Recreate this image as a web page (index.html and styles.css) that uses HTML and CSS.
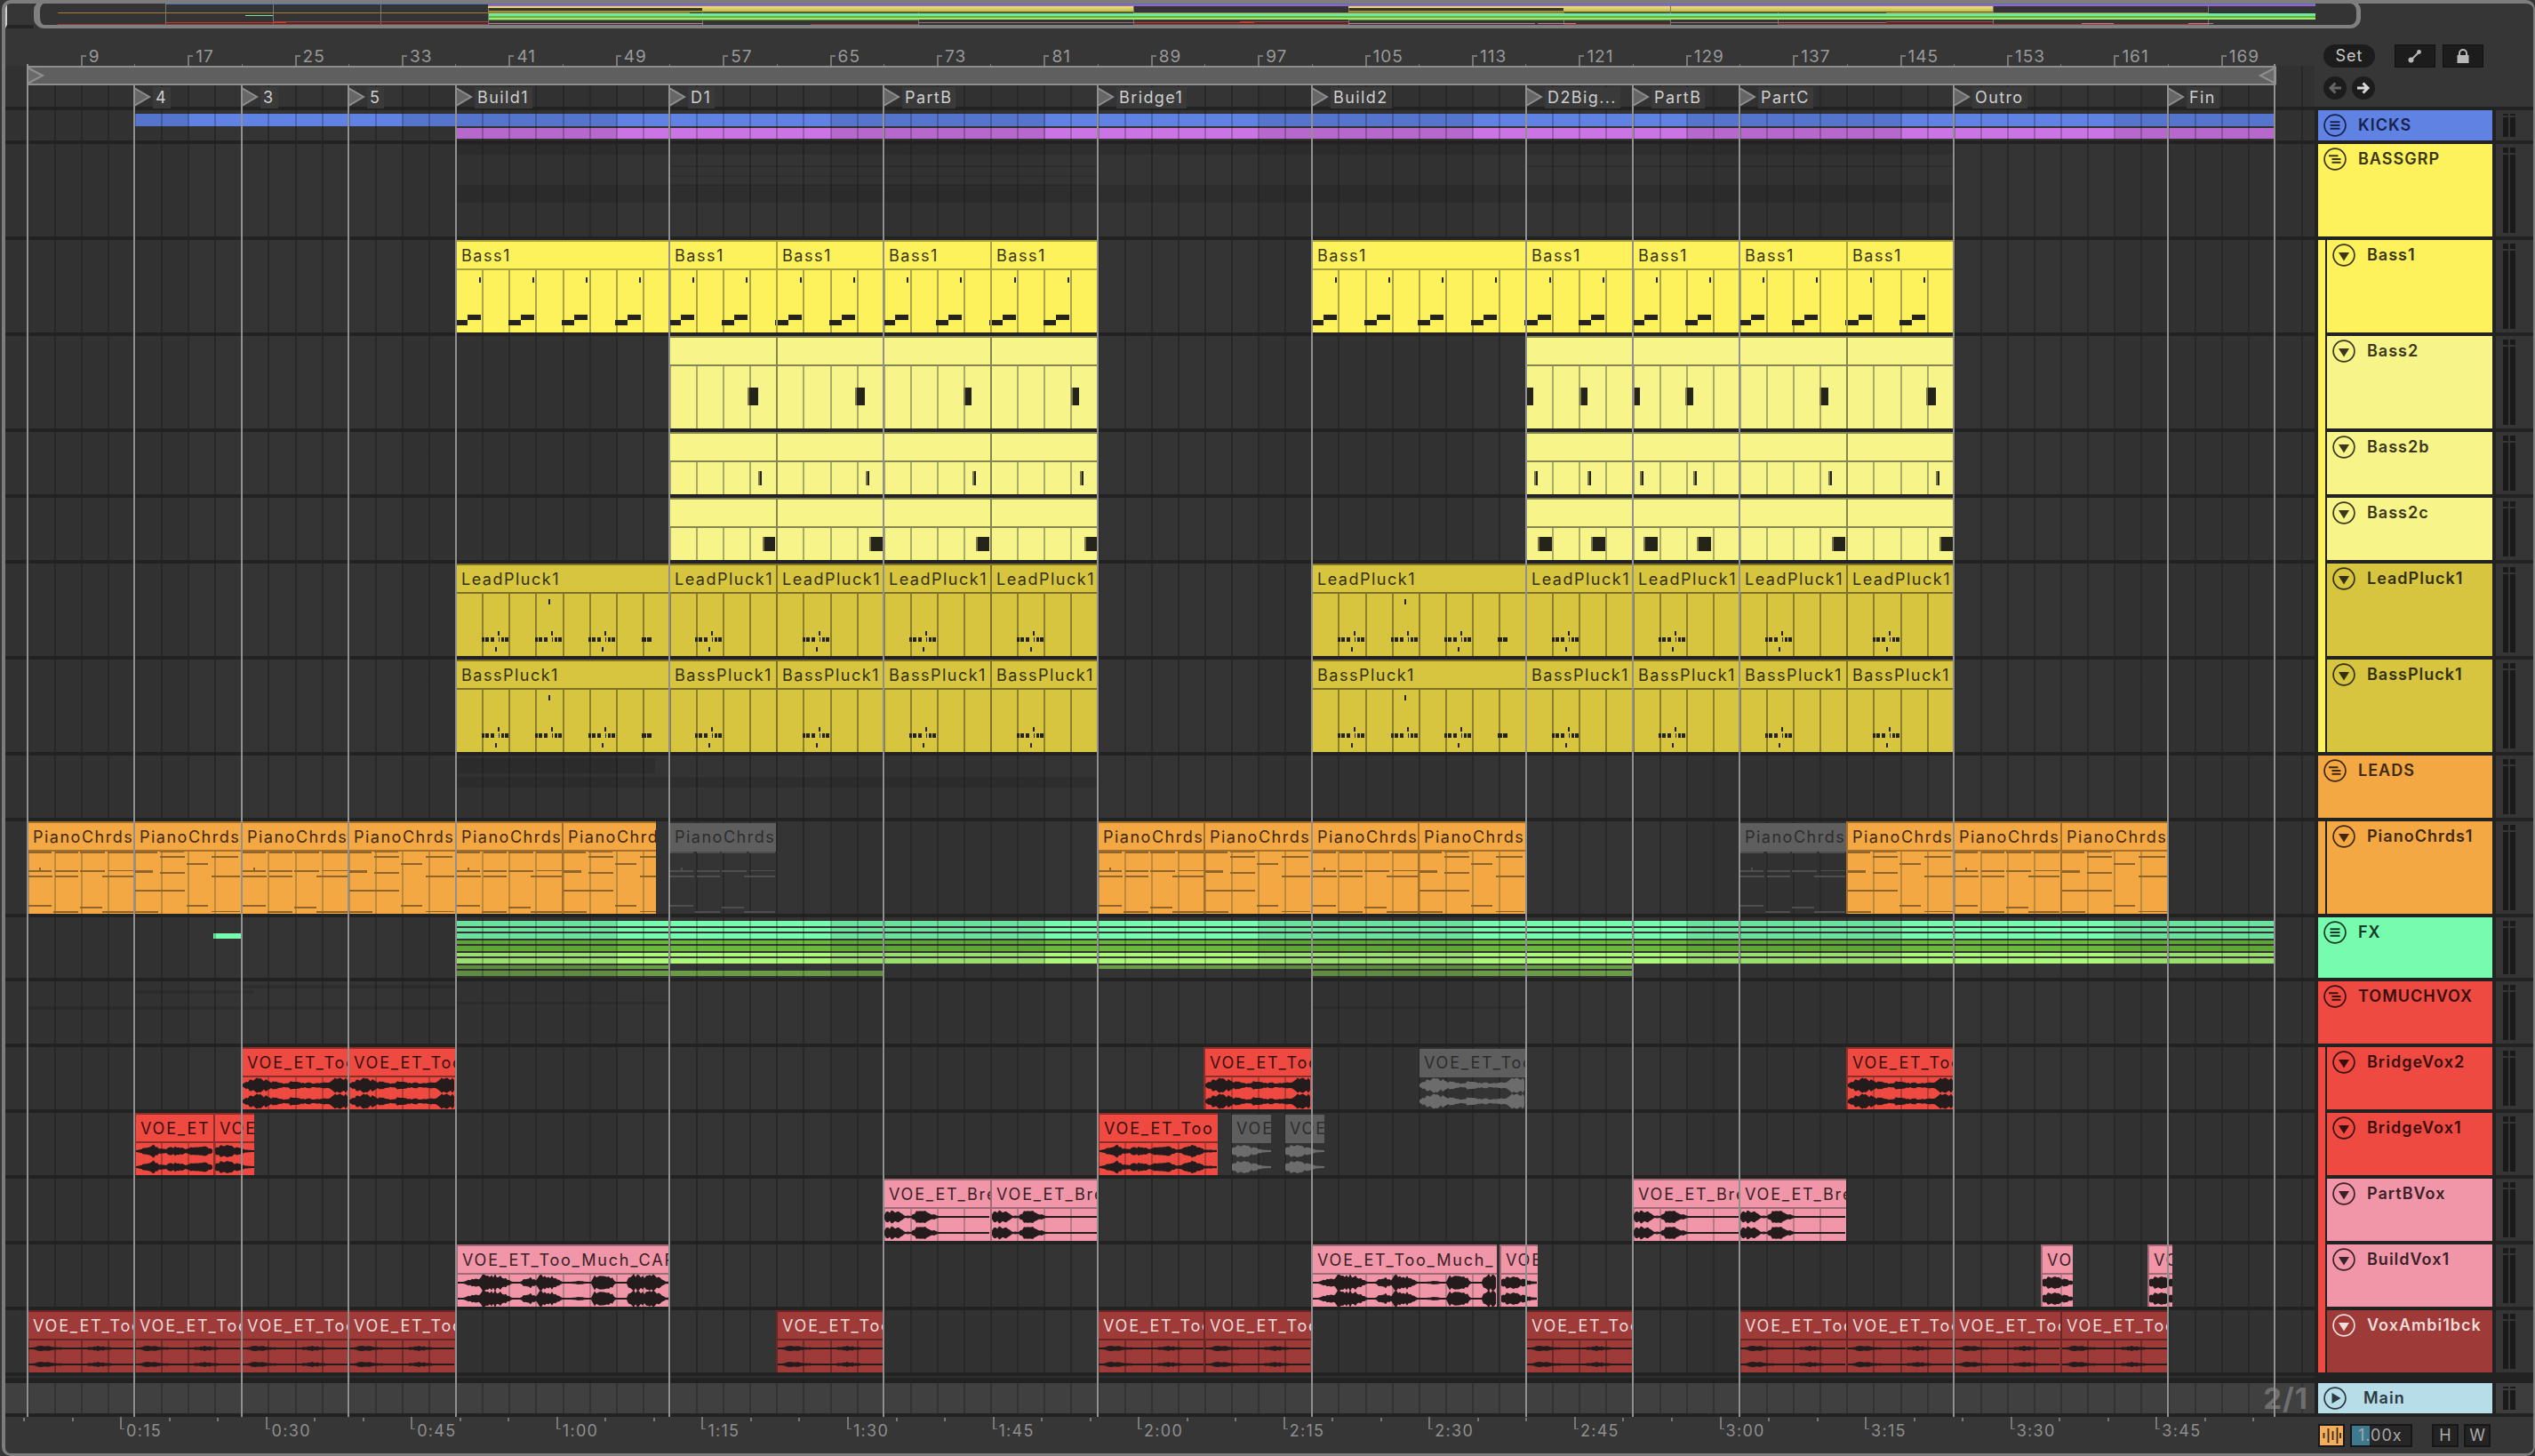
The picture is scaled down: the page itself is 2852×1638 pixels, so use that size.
FILE: index.html
```html
<!DOCTYPE html>
<html lang="en">
<head>
<meta charset="utf-8">
<title>Arrangement View</title>
<link rel="stylesheet" href="styles.css">
</head>
<body>
<svg class="defs" width="0" height="0" aria-hidden="true">
  <symbol id="i-lines" viewBox="0 0 26 26"><circle cx="13" cy="13" r="11.9" class="ring"/><path d="M7.5 9.3h11M7.5 13h11M7.5 16.7h11" class="bar"/></symbol>
  <symbol id="i-stag" viewBox="0 0 26 26"><circle cx="13" cy="13" r="11.9" class="ring"/><path d="M6 9.3h10.5M9.5 13h10M9.5 16.7h10" class="bar"/></symbol>
  <symbol id="i-down" viewBox="0 0 26 26"><circle cx="13" cy="13" r="11.9" class="ring"/><path d="M7 10h12l-6 9.5z" class="fill"/></symbol>
  <symbol id="i-play" viewBox="0 0 26 26"><circle cx="13" cy="13" r="11.9" class="ring"/><path d="M9.5 7l10 6-10 6z" class="fill"/></symbol>
</svg>
<div class="frame">
  <div class="over-row">
    <div class="over-left"></div>
    <div class="overview" id="overview"></div>
  </div>
  <div class="header">
    <div class="header-main">
      <div class="ruler" id="ruler"></div>
      <div class="toprow lane" id="toprow"></div>
    </div>
    <div class="panel">
      <div class="panel-row">
        <div class="set">Set</div>
        <div class="tool tool-a"><svg width="18" height="18" viewBox="0 0 18 18"><path d="M4 14L14 4" stroke="#b9b9b9" stroke-width="2"/><circle cx="4.5" cy="13.5" r="3" fill="#b9b9b9"/><circle cx="13.5" cy="4.5" r="2.4" fill="#b9b9b9"/></svg></div>
        <div class="tool"><svg width="18" height="18" viewBox="0 0 18 18"><path d="M5 8V6a4 4 0 018 0v2" fill="none" stroke="#b9b9b9" stroke-width="2"/><rect x="2.500" y="8" width="13" height="9" fill="#b9b9b9"/></svg></div>
      </div>
      <div class="panel-row arrows">
        <div class="arrow"><svg width="18" height="18" viewBox="0 0 18 18"><path d="M16 9H6M9.500 3.500L4 9l5.500 5.500" fill="none" stroke="#666" stroke-width="3"/></svg></div>
        <div class="arrow"><svg width="18" height="18" viewBox="0 0 18 18"><path d="M2 9h10M8.500 3.500L14 9l-5.500 5.500" fill="none" stroke="#d8d8d8" stroke-width="3"/></svg></div>
      </div>
    </div>
  </div>
  <div class="tracks" id="tracks"></div>
  <div class="stub"><div class="stub-line"></div></div>
  <div class="row h34">
    <div class="lane lane-main"><span class="sig">2/1</span></div>
    <div class="hd"><div class="head t-main head-main"><svg class="ic"><use href="#i-play"/></svg><span>Main</span></div></div>
    <div class="meter meter-main"><div class="mc"><div class="seg"></div><div class="rest"></div></div><div class="mc"><div class="seg"></div><div class="rest"></div></div></div>
  </div>
  <div class="footer">
    <div class="timeline" id="timeline"></div>
    <div class="ctrls">
      <div class="wavebtn"><svg width="26" height="22" viewBox="0 0 26 22"><path d="M4.500 8v6M9.500 3v16M14.500 6v10M19.500 2v18M23 8v6" stroke="#3a2a10" stroke-width="1.800"/></svg></div>
      <div class="zoomval"><div class="zoomfill"></div><span>1.00x</span></div>
      <div class="hw hw-h">H</div>
      <div class="hw">W</div>
    </div>
  </div>
  <div class="markers" id="markers"></div>
</div>
<script src="app.js"></script>
</body>
</html>
```

FILE: styles.css
```css
:root{
  --bands:repeating-linear-gradient(90deg,rgba(0,0,0,.1) 0 212.4px,transparent 212.4px 453.4px,rgba(0,0,0,.1) 453.4px 481.6px);
  --grid:repeating-linear-gradient(90deg,transparent 0 .4px,rgba(0,0,0,.22) .4px 2.4px,transparent 2.4px 30.1px);
}
*{box-sizing:border-box}
html,body{margin:0;height:100%;background:#363636;overflow:hidden}
body{font:18px/1 Inter,"Liberation Sans",sans-serif;letter-spacing:1px;color:#ccc}
.defs{position:absolute}
.ring{fill:none;stroke:currentColor;stroke-width:1.7}
.bar{fill:none;stroke:currentColor;stroke-width:2}
.fill{fill:currentColor}

.frame{position:relative;margin-left:2px;width:2850px;height:1638px;border:solid #7d7d7d;border-width:4px 2px 3px 4px;border-radius:10px;background:#363636;overflow:hidden}

/* overview */
.over-row{display:flex;height:28px}
.over-left{width:32px;height:28px;border-left:2px solid #cfcfcf;border-bottom:4px solid #242424}
.overview{position:relative;width:2618px;height:32px;margin-top:-4px;border:solid #808080;border-width:4px 5px 4px 7px;border-radius:12px;background:#343434;overflow:hidden}
.over-row::after{content:"";flex:1;height:28px;border-bottom:4px solid #242424}
.mini{position:absolute;height:1px}
.miniline{position:absolute;top:0;bottom:0;width:1px;background:#787878}

/* header */
.header{display:flex;height:88px}
.header-main{width:2598px;display:flex;flex-direction:column}
.ruler{position:relative;height:42px;background:#363636}
.tick{position:absolute;top:30px;height:12px;width:6px;border-left:2px solid #777;border-top:2px solid #777}
.tick-s{position:absolute;top:40px;height:2px;width:1px;background:#777}
.rlabel{position:absolute;top:21px;line-height:22px;color:#999;font-size:19px}
.toprow{position:relative;height:46px;flex:none}
.loop{position:absolute;left:25px;top:0;width:2529px;height:22px;background:#5f5f5f;border:solid #8e8e8e;border-width:2px 0}
.tri{position:absolute;display:block}
.tri-l{left:24px;top:0}
.tri-r{left:2534px;top:0}
.loc-tri{position:absolute;top:24px}
.loc-label{position:absolute;top:24px;height:24px;padding:0 4px 0 3px;line-height:24px;letter-spacing:1.4px;background:#3a3a3a;color:#cfcfcf;white-space:nowrap}

.panel{flex:1;background:#363636;padding:18px 0 0 10px}
.panel-row{display:flex;align-items:center;height:26px}
.arrows{margin-top:10px;gap:6px}
.set{width:58px;height:26px;border-radius:13px;background:#1c1c1c;color:#c9c9c9;text-align:center;line-height:26px;font-size:18px}
.tool{width:46px;height:26px;margin-left:8px;background:#1c1c1c;display:flex;align-items:center;justify-content:center;border:1px solid #111}
.tool-a{margin-left:22px}
.arrow{width:26px;height:26px;border-radius:50%;background:#1c1c1c;display:flex;align-items:center;justify-content:center}

/* rows */
.tracks{padding-top:4px;background:#222}
.row{display:flex;background:#222}
.h34{height:38px}.h68{height:72px}.h70{height:74px}.h104{height:108px}
.lane{background-color:#343434;background-image:repeating-linear-gradient(90deg,transparent 0 .4px,#282828 .4px 2.4px,transparent 2.4px 30.1px),repeating-linear-gradient(90deg,rgba(0,0,0,.05) 0 212.4px,transparent 212.4px 453.4px,rgba(0,0,0,.05) 453.4px 481.6px);background-attachment:fixed}
.row>.lane{position:relative;width:2598px;margin:0 4px 4px 0;overflow:hidden}
.hd{width:196px;display:flex;margin-right:4px}
.band{width:8px;background:var(--c)}
.band-last{margin-bottom:4px}
.head{flex:1;display:flex;padding:4px 0 0 6px;margin-bottom:4px;background:var(--c);color:var(--ink);font-weight:600;line-height:26px;white-space:nowrap}
.band+.head{margin-left:2px}
.head span{margin-left:13px}
.head-main span{margin-left:19px}
.ic{width:26px;height:26px;flex:none;display:block}
.meter{width:42px;margin-bottom:4px;background:#353535;display:flex;gap:2px;padding:4px 0 4px 8px}
.meter-main{background:#3d3d3d}
.mc{width:6px;display:flex;flex-direction:column;gap:2px}
.seg{height:6px;background:#1a1a1a}
.h34 .seg{height:2px}
.rest{flex:1;background:#1a1a1a}
.stub{height:8px;background:#222}
.stub-line{width:2598px;height:2px;background:#2e2e2e}
.lane-main{background-color:#404040;background-image:repeating-linear-gradient(90deg,transparent 0 .4px,#333 .4px 2.4px,transparent 2.4px 30.1px);flex:none}
.sig{position:absolute;right:7px;top:1px;font-size:33px;line-height:32px;font-weight:700;letter-spacing:1px;color:#6e6e6e}

/* clip */
.clip{position:absolute;top:0;bottom:0;display:flex;flex-direction:column;background:var(--c);border:solid var(--edge);border-width:2px 0 0 2px;color:var(--ink);overflow:hidden}
.ct{height:32px;flex:none;padding-left:5px;line-height:32px;letter-spacing:1.5px;border-bottom:2px solid var(--edge);white-space:nowrap;overflow:hidden}
.vox .ct{letter-spacing:1.8px}
.cb{flex:1;background-image:repeating-linear-gradient(90deg,transparent 0 .4px,var(--ln) .4px 2.4px,transparent 2.4px 30.1px);background-attachment:fixed}
.muted{background:transparent;border-color:transparent;color:#2c2c2c}
.muted .ct{background:#5e5e5e;margin:-2px 0 0 -2px;height:34px;padding:2px 0 0 7px;border:0}
.muted .cb{background:none}
.n{position:absolute;background:var(--nt,#24241a)}
.pale-n{border-left:2px solid #7b7b4b}
.wave{position:absolute;left:-2px;top:-2px;display:block}
.strip{position:absolute;background-color:var(--c);background-image:var(--grid),var(--bands);background-attachment:fixed}
.ghost{position:absolute;background:rgba(0,0,0,.11)}

/* themes */
.t-blue{--c:#5f82e3;--ink:#16224d}
.t-purple{--c:#cb74e3}
.t-yel{--c:#fdf25c;--ink:#3a3613;--edge:#a9a33e;--ln:#a9a34a;--nt:#25241a}
.t-pale{--c:#f7f48a;--ink:#3a3818;--edge:#85854f;--ln:#a9a968;--nt:#25241a}
.t-gold{--c:#d7c53f;--ink:#33300f;--edge:#7d7129;--ln:#8b7f2e;--nt:#25241a}
.t-org{--c:#f3a843;--ink:#40290c;--edge:#a3702b;--ln:#b98a3c;--nt:#8f642a}
.t-mint{--c:#77fbaf;--ink:#123a26}
.t-green{--c:#68b93c}
.t-lime{--c:#aaf77a}
.t-dull{--c:#6b9c48}
.t-red{--c:#ef4a42;--ink:#3a0e0b;--edge:#8f2e29;--ln:#b23a33;--nt:#241c1c}
.t-pink{--c:#f096a8;--ink:#3a2127;--edge:#a06b77;--ln:#b77b88;--nt:#241c1c}
.t-dark{--c:#9e3a38;--ink:#f1dcdc;--edge:#6b2523;--ln:#6f2a28;--nt:#241c1c}
.t-main{--c:#b7dde8;--ink:#2c3a40}
.t-dark.head{font-weight:600}

/* footer */
.footer{display:flex;height:41px;background:#363636}
.timeline{position:relative;width:2598px;height:40px}
.ttick{position:absolute;top:0;width:5px;height:14px;border-left:2px solid #777;border-bottom:1px solid #777}
.ttick-s{position:absolute;top:1px;width:2px;height:4px;background:#777}
.tlabel{position:absolute;top:6px;line-height:20px;letter-spacing:1.3px;color:#8e8e8e}
.ctrls{padding:8px 0 0 4px;display:flex;flex:1}
.wavebtn{width:30px;height:26px;background:#f3ad5c;border:2px solid #171717;display:flex;align-items:center;justify-content:center}
.zoomval{position:relative;width:70px;height:26px;margin-left:6px;background:#262626;border:2px solid #171717;color:#a9a9a9;line-height:22px;padding-left:7px}
.zoomfill{position:absolute;left:0;top:0;bottom:0;width:20px;background:#3d7a90}
.zoomval span{position:relative}
.hw{width:30px;height:26px;margin-left:6px;background:#232323;border:2px solid #171717;color:#aaa;text-align:center;line-height:22px;letter-spacing:0}
.hw-h{margin-left:22px}

/* markers */
.markers{position:absolute;left:0;top:0;width:100%;height:100%;pointer-events:none}
.mk{position:absolute;width:2px;top:92px;height:1498px;background:#909090}
.mk-loop{top:68px;height:1522px}
```

FILE: app.js
```js
const col = n => Math.floor(30.5 + 120.4 * n);
const OX = 6;                                   // left edge of the lanes
const mini = x => 66 + (x - 31) * 1.0047;

const pairs = a => a.map(([s, e]) => ({ x: col(s), e: col(e), s }));
const BASS = [[4,6],[6,7],[7,8],[8,9],[9,10],[12,14],[14,15],[15,16],[16,17],[17,18]];
const PALE = BASS.filter(p => p[1] - p[0] === 1);

// pale-clip note offsets per starting column: [x0, x1]
const P2  = {6:[[89,101]],7:[[89,100]],8:[[91,100]],9:[[91,100]],14:[[0,9],[61,70]],15:[[1,9],[60,69]],16:[[91,101]],17:[[90,101]]};
const P2B = {6:[[101,105]],7:[[101,105]],8:[[101,105]],9:[[101,105]],14:[[10,14],[70,74]],15:[[9,13],[69,73]],16:[[101,105]],17:[[101,105]]};
const P2C = {6:[[106,120]],7:[[105,120]],8:[[105,120]],9:[[106,120]],14:[[14,30],[74,90]],15:[[13,29],[73,89]],16:[[105,120]],17:[[105,120]]};

// piano roll: [x0, x1, y, h]
const PA = [[0,28,34,2],[32,58,34,2],[60,88,34,2],[91,120,34,2],[0,28,55,2],[32,58,55,2],[60,88,55,2],[14,16,52,3],[92,120,55,1],[0,29,61,2],[32,58,61,2],[85,120,61,2],[0,28,94,2],[60,85,96,2],[30,58,101,2],[85,120,101,2]];
const PB = [[0,27,34,2],[30,57,34,1],[30,58,39,2],[60,84,47,2],[88,118,39,2],[0,22,55,3],[30,58,57,2],[88,120,61,2],[0,30,77,2],[30,58,77,2],[60,84,94,2],[0,28,101,2],[88,120,101,1]];

// wave envelopes: [x, amp]
const ENV = {
  too:[[0,1],[4,3],[10,6],[18,8],[28,7],[32,4],[40,4],[48,2],[56,5],[62,5],[70,3],[78,3],[92,3],[100,4],[106,8],[118,8],[120,6]],
  et:[[0,1],[8,3],[15,4],[22,7],[28,4],[35,3],[40,5],[48,5],[55,4],[60,3],[66,6],[72,4],[80,5],[88,2],[100,5],[108,7],[120,2],[135,1]],
  voe:[[0,2],[6,6],[12,7],[20,6],[28,4],[36,1.500],[46,1],[60,1]],
  much:[[0,1],[8,1],[14,4],[20,4],[26,5],[30,9],[48,9],[54,7],[60,3],[64,1],[72,1],[78,6],[84,6],[90,3],[94,8],[100,9],[108,7],[114,4],[120,1],[130,1],[140,2],[148,1],[152,1],[156,8],[170,7],[176,6],[180,1],[192,1],[196,9],[204,9],[214,8],[222,9],[228,7],[232,3],[240,1]],
  bre:[[0,1],[4,6],[10,7],[18,6],[24,2],[32,1],[38,6],[46,7],[56,4],[64,1],[120,1]],
  ambi:[[0,1],[8,1.500],[14,3],[22,3],[28,2],[40,1.100],[64,1.100],[72,2],[80,3],[88,2.500],[96,1.100],[120,1]]
};

const RED = [[2,3],[3,4],[11,12],[17,18]].map(([a,b]) => ({ x:col(a), e:col(b), w:'too' }));
const TRACKS = [
  { id:'kick', name:'KICKS', h:34, th:'t-blue', ic:'lines' },
  { id:'grp',  name:'BASSGRP', h:104, th:'t-yel', ic:'stag', group:'t-yel' },
  { id:'b1',   name:'Bass1', h:104, th:'t-yel', ic:'down', group:'t-yel', label:'Bass1', clips:pairs(BASS), mini:[7,2,'#e8de55'] },
  { id:'b2',   name:'Bass2', h:104, th:'t-pale', ic:'down', group:'t-yel', label:'', clips:pairs(PALE), pale:P2, ny:[58,20], mini:[9,1,'#d8d470'] },
  { id:'b2b',  name:'Bass2b', h:70, th:'t-pale', ic:'down', group:'t-yel', label:'', clips:pairs(PALE), pale:P2B, ny:[44,16], mini:[10,1,'#c9c563'] },
  { id:'b2c',  name:'Bass2c', h:70, th:'t-pale', ic:'down', group:'t-yel', label:'', clips:pairs(PALE), pale:P2C, ny:[44,16], mini:[11,1,'#d8d470'] },
  { id:'lp',   name:'LeadPluck1', h:104, th:'t-gold', ic:'down', group:'t-yel', label:'LeadPluck1', clips:pairs(BASS), gold:1, mini:[12,1,'#a89a35'] },
  { id:'bp',   name:'BassPluck1', h:104, th:'t-gold', ic:'down', group:'t-yel', last:1, label:'BassPluck1', clips:pairs(BASS), gold:1, mini:[13,1,'#8f8330'] },
  { id:'leads',name:'LEADS', h:70, th:'t-org', ic:'stag', group:'t-org' },
  { id:'piano',name:'PianoChrds1', h:104, th:'t-org', ic:'down', group:'t-org', last:1, label:'PianoChrds', piano:1,
    clips:[[0,1],[1,2],[2,3],[3,4],[4,5]].map(([a,b]) => ({x:col(a),e:col(b),s:a})).concat([{x:col(5),e:738,s:5,l:'PianoChrd'},{x:col(6),e:col(7),s:6,m:1},{x:col(10),e:col(11),s:10},{x:col(11),e:col(12),s:11},{x:col(12),e:col(13),s:12},{x:col(13),e:col(14),s:13},{x:col(16),e:col(17),s:16,m:1},{x:col(17),e:col(18),s:17},{x:col(18),e:col(19),s:18},{x:col(19),e:col(20),s:19}]), mini:[14,1,'#a87c34'] },
  { id:'fx',   name:'FX', h:68, th:'t-mint', ic:'lines' },
  { id:'tmv',  name:'TOMUCHVOX', h:70, th:'t-red', ic:'stag', group:'t-red' },
  { id:'v2',   name:'BridgeVox2', h:70, th:'t-red', ic:'down', group:'t-red', label:'VOE_ET_Too', clips:RED.concat([{x:col(13),e:col(14),w:'too',m:1}]), mini:[24,1,'#b03a34'] },
  { id:'v1',   name:'BridgeVox1', h:70, th:'t-red', ic:'down', group:'t-red', label:'VOE',
    clips:[{x:151,e:240,w:'et',l:'VOE_ET'},{x:240,e:286,w:'voe'},{x:1235,e:1370,w:'et',l:'VOE_ET_Too'},{x:1384,e:1430,w:'voe',m:1},{x:1444,e:1490,w:'voe',m:1}], mini:[25,1,'#c23d36'] },
  { id:'pb',   name:'PartBVox', h:70, th:'t-pink', ic:'down', group:'t-red', label:'VOE_ET_Bre', clips:[[8,9],[9,10],[15,16],[16,17]].map(([a,b]) => ({x:col(a),e:col(b),w:'bre'})), mini:[25,1,'#a36b76'] },
  { id:'bv',   name:'BuildVox1', h:70, th:'t-pink', ic:'down', group:'t-red', label:'VOE',
    clips:[{x:513,e:753,w:'much',l:'VOE_ET_Too_Much_CAR'},{x:1475,e:1684,w:'much',l:'VOE_ET_Too_Much_'},{x:1687,e:1730,w:'voe'},{x:2296,e:2332,w:'voe',l:'VOI'},{x:2416,e:2444,w:'voe',l:'VC'}], mini:[26,1,'#c47f8c'] },
  { id:'ab',   name:'VoxAmbi1bck', h:70, th:'t-dark', ic:'down', group:'t-red', last:1, label:'VOE_ET_Too',
    clips:[[0,1],[1,2],[2,3],[3,4],[7,8],[10,11],[11,12],[14,15],[16,17],[17,18],[18,19],[19,20]].map(([a,b]) => ({x:col(a),e:col(b),w:'ambi'})), mini:[27,1,'#9e3a38'] }
];

const STRIPS = {
  kick:[['t-blue',4,14,151,2558],['t-purple',20,12,513,2558]],
  fx:[['t-mint',4,6,513,2558],['t-mint',12,4,513,2558],['t-mint',18,6,513,2558],['t-mint',18,6,240,271],
      ['t-green',26,4,513,2558],['t-green',32,6,513,2558],['t-lime',40,4,513,2558],['t-lime',46,6,513,2558],
      ['t-dull',54,4,513,753],['t-dull',54,4,1236,1836],['t-dull',60,6,513,993],['t-dull',60,6,1475,1836]]
};
const GHOSTS = {
  grp:[[0,12,513,2198],[46,20,513,2198],[24,2,753,1235],[35,2,753,1235],[45,2,753,1235],[24,2,1716,2198]],
  leads:[[3,17,513,737],[24,12,513,1235]],
  tmv:[[4,4,272,513],[10,4,151,286],[28,4,32,513],[23,3,513,752],[28,3,1475,1716]]
};
const MINI_STRIP = { kick:[[4,1,'#5670c0',151],[5,2,'#9a62c8',513]] };

function rng(seed){ let s = seed; return () => (s = (s * 16807) % 2147483647) / 2147483647; }
function ampAt(env, x){
  for (let i = 1; i < env.length; i++) if (x <= env[i][0]) {
    const [a, b] = [env[i-1], env[i]];
    return a[1] + (b[1]-a[1]) * (x-a[0]) / (b[0]-a[0]);
  }
  return env[env.length-1][1];
}
function waveSvg(name, w, color){
  const env = ENV[name], r = rng(name.length * 7919 + 13);
  const amps = [];
  for (let x = 0; x <= w; x += 2) { const a = ampAt(env, x); amps.push([x, a <= 1.2 ? a : Math.max(1, a * (.62 + .5 * r()))]); }
  const path = c => {
    const up = amps.map(([x,a]) => `${x} ${(c-a).toFixed(1)}`).join('L');
    const dn = amps.slice().reverse().map(([x,a]) => `${x} ${(c+a).toFixed(1)}`).join('L');
    return `M${up}L${dn}Z`;
  };
  return `<svg class="wave" width="${w}" height="70"><path fill="${color}" d="${path(43)}${path(61)}"/></svg>`;
}
const note = (x,y,w,h,cls='') => `<i class="n ${cls}" style="left:${x-2}px;top:${y-2}px;width:${w}px;height:${h}px"></i>`;

function clipNotes(t, c){
  const w = c.e - c.x; let o = '';
  if (t.id === 'b1') for (let b = 0; b < w; b += 60) o += note(b,90,14,6) + note(b+14,84,15,6) + note(b+27,42,2,6);
  if (t.pale) (t.pale[c.s] || []).forEach(([a,b]) => o += note(a,t.ny[0],b-a,t.ny[1],'pale-n'));
  if (t.gold) {
    const cluster = (b, low) => note(b,83,3,5)+note(b+4,83,4,5)+note(b+10,83,4,5)+note(b+18,76,2,5)+note(b+19,83,1,5)+note(b+22,83,3,5)+note(b+26,83,4,5)+(low?note(b+15,94,2,5):'');
    if (w > 200) { o += cluster(30,1)+cluster(90,0)+cluster(150,1)+note(210,83,5,5)+note(216,83,5,5)+note(105,40,2,6); }
    else o += cluster(30,1);
  }
  if (t.piano) (c.s % 2 ? PB : PA).forEach(([a,b,y,h]) => o += note(a,y,Math.min(b,w)-a,h));
  if (c.w) o += waveSvg(c.w, w, c.m ? '#6c6c6c' : '#241c1c');
  return o;
}

function clipHtml(t, c){
  return `<div class="clip ${t.th}${c.w?' vox':''}${c.m?' muted':''}" style="left:${c.x-OX}px;width:${c.e-c.x}px${c.m&&t.piano?';--nt:#4e4e4e':''}"><div class="ct">${c.l||t.label}</div><div class="cb"></div>${clipNotes(t,c)}</div>`;
}

let html = '';
TRACKS.forEach(t => {
  let lane = '';
  (GHOSTS[t.id]||[]).forEach(([y,h,a,b]) => lane += `<div class="ghost" style="left:${a-OX}px;top:${y}px;width:${b-a}px;height:${h}px"></div>`);
  (t.clips||[]).forEach(c => lane += clipHtml(t,c));
  (STRIPS[t.id]||[]).forEach(([th,y,h,a,b]) => lane += `<div class="strip ${th}" style="left:${a-OX}px;top:${y}px;width:${b-a}px;height:${h}px"></div>`);
  const isChild = t.group && t.ic === 'down';
  const band = isChild ? `<div class="band ${t.group}${t.last?' band-last':''}"></div>` : '';
  const cont = t.ic === 'stag' ? ` ${t.th} head-group` : '';
  const mc = '<div class="mc"><div class="seg"></div><div class="rest"></div></div>';
  html += `<div class="row h${t.h}"><div class="lane">${lane}</div><div class="hd${cont}">${band}<div class="head ${t.th}"><svg class="ic"><use href="#i-${t.ic}"/></svg><span>${t.name}</span></div></div><div class="meter">${mc}${mc}</div></div>`;
});
document.getElementById('tracks').innerHTML = html;

// overview
let ov = '';
const THEME = { 't-mint':'#6fe8a0','t-green':'#63b23a','t-lime':'#a0e873','t-dull':'#5e8a40' };
[1,2,3,4,6,8,10,12,14,15,16,18,20].forEach(n => ov += `<div class="miniline" style="left:${mini(col(n))-45}px"></div>`);
const mrect = (a,b,y,h,color) => `<div class="mini" style="left:${(mini(a)-45).toFixed(1)}px;width:${((b-a)*1.0047).toFixed(1)}px;top:${y-4}px;height:${h}px;background:${color}"></div>`;
MINI_STRIP.kick.forEach(([y,h,c,a]) => ov += mrect(a,2558,y,h,c));
TRACKS.forEach(t => { if (t.mini) t.clips.forEach(c => { if (!c.m) ov += mrect(c.x,c.e,t.mini[0],t.mini[1],t.mini[2]); }); });
[[15,3,'t-mint',513,2558],[18,2,'t-green',513,2558],[20,2,'t-lime',513,2558],[17,1,'t-mint',240,271],[22,1,'t-dull',513,993],[22,1,'t-dull',1475,1836]]
  .forEach(([y,h,th,a,b]) => ov += mrect(a,b,y,h,THEME[th]));
document.getElementById('overview').innerHTML = ov;

// ruler
let ru = '';
for (let i = 0; i <= 20; i++) {
  const x = 90.8 + 120.4 * i - OX;
  ru += `<div class="tick" style="left:${x.toFixed(1)}px"></div><div class="rlabel" style="left:${(x+9).toFixed(1)}px">${9 + 8*i}</div>`;
  ru += `<div class="tick-s" style="left:${(x-60).toFixed(1)}px"></div>`;
}
document.getElementById('ruler').innerHTML = ru;

// loop + locators
const triSvg = (pts, cls) => `<svg class="${cls}" width="22" height="22"><polygon points="${pts}" fill="#6a6a6a" stroke="#8e8e8e" stroke-width="2"/></svg>`;
let tr = `<div class="loop"></div>` + triSvg('1,2 18,11 1,20','tri tri-l') + triSvg('20,2 3,11 20,20','tri tri-r');
const LOCS = [[1,'4'],[2,'3'],[3,'5'],[4,'Build1'],[6,'D1'],[8,'PartB'],[10,'Bridge1'],[12,'Build2'],[14,'D2Big...'],[15,'PartB'],[16,'PartC'],[18,'Outro'],[20,'Fin']];
LOCS.forEach(([n,name]) => {
  const x = col(n) - OX;
  tr += `<svg class="loc-tri" style="left:${x}px" width="20" height="22"><polygon points="1,1 18,11 1,21" fill="#666" stroke="#8e8e8e" stroke-width="2"/></svg><div class="loc-label" style="left:${x+22}px">${name}</div>`;
});
document.getElementById('toprow').innerHTML = tr;

// markers
let mk = `<div class="mk mk-loop" style="left:${col(0)-OX}px"></div><div class="mk mk-loop" style="left:${col(21)-OX}px"></div>`;
LOCS.forEach(([n]) => mk += `<div class="mk" style="left:${col(n)-OX}px"></div>`);
document.getElementById('markers').innerHTML = mk;

// time ruler
let ti = '';
const NAMES = ['0:15','0:30','0:45','1:00','1:15','1:30','1:45','2:00','2:15','2:30','2:45','3:00','3:15','3:30','3:45'];
for (let k = -2; k * 54.53 + 135 < 2592; k++) {
  const x = 135 + k * 54.53 - OX;
  if ((k + 300) % 3 === 0) {
    const i = k / 3;
    if (NAMES[i]) ti += `<div class="ttick" style="left:${x.toFixed(1)}px"></div><div class="tlabel" style="left:${(x+7).toFixed(1)}px">${NAMES[i]}</div>`;
  } else ti += `<div class="ttick-s" style="left:${x.toFixed(1)}px"></div>`;
}
document.getElementById('timeline').innerHTML = ti;
```
